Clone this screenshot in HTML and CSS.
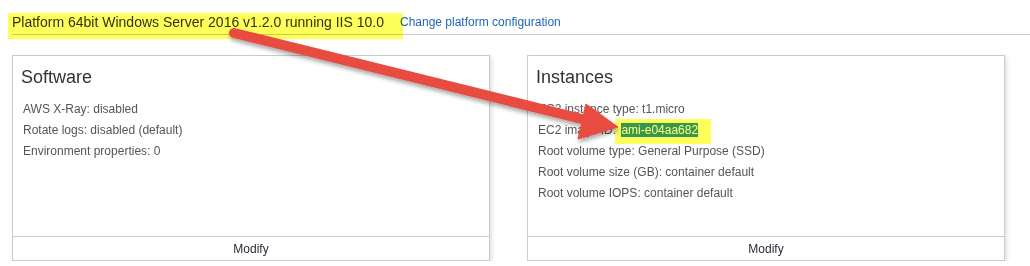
FILE: index.html
```html
<!DOCTYPE html>
<html>
<head>
    <title>Environment configuration</title>
    <link rel="stylesheet" href="styles.css">
</head>
<body>

    <div class="env-header">
        <span class="platform-name">Platform 64bit Windows Server 2016 v1.2.0 running IIS 10.0</span>
        <a class="change-link" href="#">Change platform configuration</a>
    </div>
    <div class="header-mark"></div>

    <div class="cards">
        <div class="card">
            <h2>Software</h2>
            <ul>
                <li>AWS X-Ray: disabled</li>
                <li>Rotate logs: disabled (default)</li>
                <li>Environment properties: 0</li>
            </ul>
            <div class="card-footer">Modify</div>
        </div>

        <div class="card">
            <h2>Instances</h2>
            <ul>
                <li>EC2 instance type: t1.micro</li>
                <li>EC2 image ID: <span class="ami-mark"><span class="ami-sel">ami-e04aa682</span></span></li>
                <li>Root volume type: General Purpose (SSD)</li>
                <li>Root volume size (GB): container default</li>
                <li>Root volume IOPS: container default</li>
            </ul>
            <div class="card-footer">Modify</div>
        </div>
    </div>

    <!-- annotation arrow drawn over the page -->
    <svg class="annotation" width="1030" height="266" viewBox="0 0 1030 266">
        <defs>
            <filter id="arrowShadow" x="-10%" y="-10%" width="120%" height="140%">
                <feDropShadow dx="1" dy="3" stdDeviation="2" flood-color="#000" flood-opacity="0.35"/>
            </filter>
        </defs>
        <g filter="url(#arrowShadow)" fill="#e84b3f" stroke="#e84b3f">
            <line x1="234" y1="33" x2="590" y2="121" stroke-width="10" stroke-linecap="round"/>
            <polygon points="618,127 586,104 578,139" stroke-width="1" stroke-linejoin="round"/>
        </g>
    </svg>

</body>
</html>
```

FILE: styles.css
```css
body {
    margin: 0;
    font-family: "Liberation Sans", Arial, sans-serif;
    background-color: #fff;
    position: relative;
}
.env-header {
    margin-left: 12px;
    padding: 14px 0 4px;
    border-bottom: 1px solid #ccc;
    display: flex;
    align-items: flex-end;
    gap: 16px;
    height: 16px;
}
.platform-name {
    font-size: 14px;
    line-height: 16px;
    color: #333;
}
.change-link {
    font-size: 12px;
    line-height: 16px;
    color: #1f66b5;
    text-decoration: none;
}
.header-mark {
    position: absolute;
    left: 8px;
    top: 13px;
    width: 395px;
    height: 26px;
    background-color: #ffff5c;
    mix-blend-mode: multiply;
}
.cards {
    display: flex;
    gap: 37px;
    margin: 20px 0 0 12px;
}
.card {
    width: 478px;
    height: 206px;
    box-sizing: border-box;
    border: 1px solid #ccc;
    display: flex;
    flex-direction: column;
    box-shadow: 2px 2px 4px rgba(0, 0, 0, 0.12);
}
.card h2 {
    margin: 0;
    padding: 10px 8px 0;
    font-size: 18px;
    font-weight: normal;
    line-height: 22px;
    color: #333;
}
.card ul {
    list-style-type: none;
    margin: 11px 0 0;
    padding: 0 10px;
    flex: 1;
    font-size: 12px;
    line-height: 21px;
    color: #555;
}
.ami-mark {
    background-color: #ffff5c;
    padding: 4px 13px 7px 6px;
    margin-left: -4px;
}
.ami-sel {
    background-color: #37984b;
    color: #ffff80;
}
.card-footer {
    border-top: 1px solid #ccc;
    text-align: center;
    font-size: 12px;
    line-height: 23px;
    padding-top: 1px;
    height: 22px;
    color: #2a2a3a;
}
.annotation {
    position: absolute;
    left: 0;
    top: 0;
    pointer-events: none;
}
```
